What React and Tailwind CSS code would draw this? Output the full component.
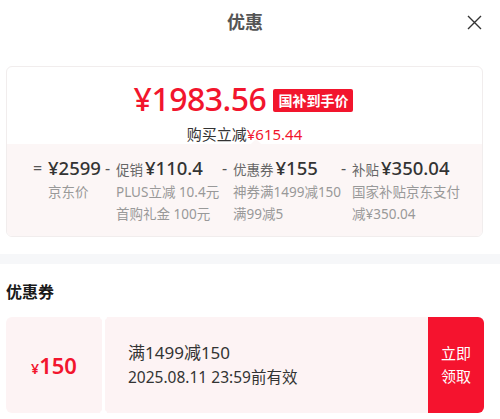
import React from "react";

const red = "text-[#f2152d]";

const Col = ({ sign, label, amount, lines, width, signWidth = "w-[11px]" }) => (
  <div className={`flex ${width}`}>
    <span className={`${signWidth} shrink-0 text-[16px] leading-[26px] text-[#555]`}>{sign}</span>
    <div className="flex flex-col">
      <div className="flex items-baseline gap-[2px] h-[26px]">
        {label && <span className="text-[13.5px] text-[#666]">{label}</span>}
        <span className="text-[18.5px] leading-[26px] font-medium text-[#333]">{amount}</span>
      </div>
      {lines.map((l) => (
        <span key={l} className="text-[13.5px] leading-[22px] text-[#999] whitespace-nowrap">
          {l}
        </span>
      ))}
    </div>
  </div>
);

export default function App() {
  return (
    <div className="w-[500px] h-[419px] bg-white overflow-hidden font-['Noto_Sans','Noto_Sans_CJK_SC',sans-serif]">
      {/* header */}
      <div className="relative h-[44px] flex items-center justify-center">
        <span className="text-[18px] font-bold text-[#555] ml-[-10px]">优惠</span>
        <svg
          className="absolute right-[18px] top-[15px]"
          width="15"
          height="15"
          viewBox="0 0 15 15"
          fill="none"
          stroke="#333"
          strokeWidth="1.4"
        >
          <path d="M1 1L14 14M14 1L1 14" />
        </svg>
      </div>

      {/* price card */}
      <div className="mx-[6px] mt-[22px] w-[477px] h-[171px] rounded-[6px] border border-[#f1eded] overflow-hidden flex flex-col">
        <div className="h-[77px] flex flex-col items-center pt-[13px]">
          <div className="flex items-center gap-[7px] ml-[-2px]">
            <span className={`${red} text-[32px] leading-[38px] font-medium tracking-[-0.5px]`}>
              ¥1983.56
            </span>
            <span className="bg-[#f2152d] text-white text-[14px] font-bold leading-[23px] px-[5px] rounded-[2px] mt-[2px]">
              国补到手价
            </span>
          </div>
          <div className="text-[15px] leading-[22px] text-[#333] mt-[5px]">
            购买立减<span className={red}>¥615.44</span>
          </div>
        </div>
        <div className="relative flex-1 bg-[#fcf6f6] pl-[26px] pt-[11px] flex">
          <div className="absolute left-[244px] top-[-5px] w-0 h-0 border-l-[5px] border-r-[5px] border-b-[5px] border-l-transparent border-r-transparent border-b-[#fcf6f6]" />
          <Col sign="=" amount="¥2599" lines={["京东价"]} width="w-[72px]" signWidth="w-[15px]" />
          <Col sign="-" label="促销" amount="¥110.4" lines={["PLUS立减 10.4元", "首购礼金 100元"]} width="w-[117px]" />
          <Col sign="-" label="优惠券" amount="¥155" lines={["神券满1499减150", "满99减5"]} width="w-[119px]" />
          <Col sign="-" label="补贴" amount="¥350.04" lines={["国家补贴京东支付", "减¥350.04"]} width="w-[120px]" />
        </div>
      </div>

      {/* divider */}
      <div className="mt-[17px] h-[10px] bg-[#f6f7f9]" />

      {/* coupons */}
      <div className="px-[6px] pt-[17px]">
        <div className="text-[16px] font-bold text-[#1a1a1a] leading-[22px]">优惠券</div>
        <div className="mt-[14px] w-[478px] h-[96px] flex">
          <div className="relative flex gap-[3px] flex-1">
            <div className="w-[96px] bg-[#fdf3f4] rounded-l-[6px] flex items-center justify-center">
              <span className={`${red} font-semibold`}>
                <span className="text-[14px]">¥</span>
                <span className="text-[22px]">150</span>
              </span>
            </div>
            <div className="flex-1 bg-[#fdf3f4] flex flex-col justify-center pl-[23px]">
              <span className="text-[17px] leading-[25px] text-[#333]">满1499减150</span>
              <span className="text-[15.5px] leading-[25px] text-[#333]">2025.08.11 23:59前有效</span>
            </div>
            <div className="absolute left-[94px] top-[-4px] w-[7px] h-[7px] rounded-full bg-white" />
            <div className="absolute left-[94px] bottom-[-4px] w-[7px] h-[7px] rounded-full bg-white" />
          </div>
          <div className="w-[56px] bg-[#f5132e] rounded-r-[6px] flex flex-col items-center justify-center text-white text-[15px] leading-[23px]">
            <span>立即</span>
            <span>领取</span>
          </div>
        </div>
      </div>
    </div>
  );
}
